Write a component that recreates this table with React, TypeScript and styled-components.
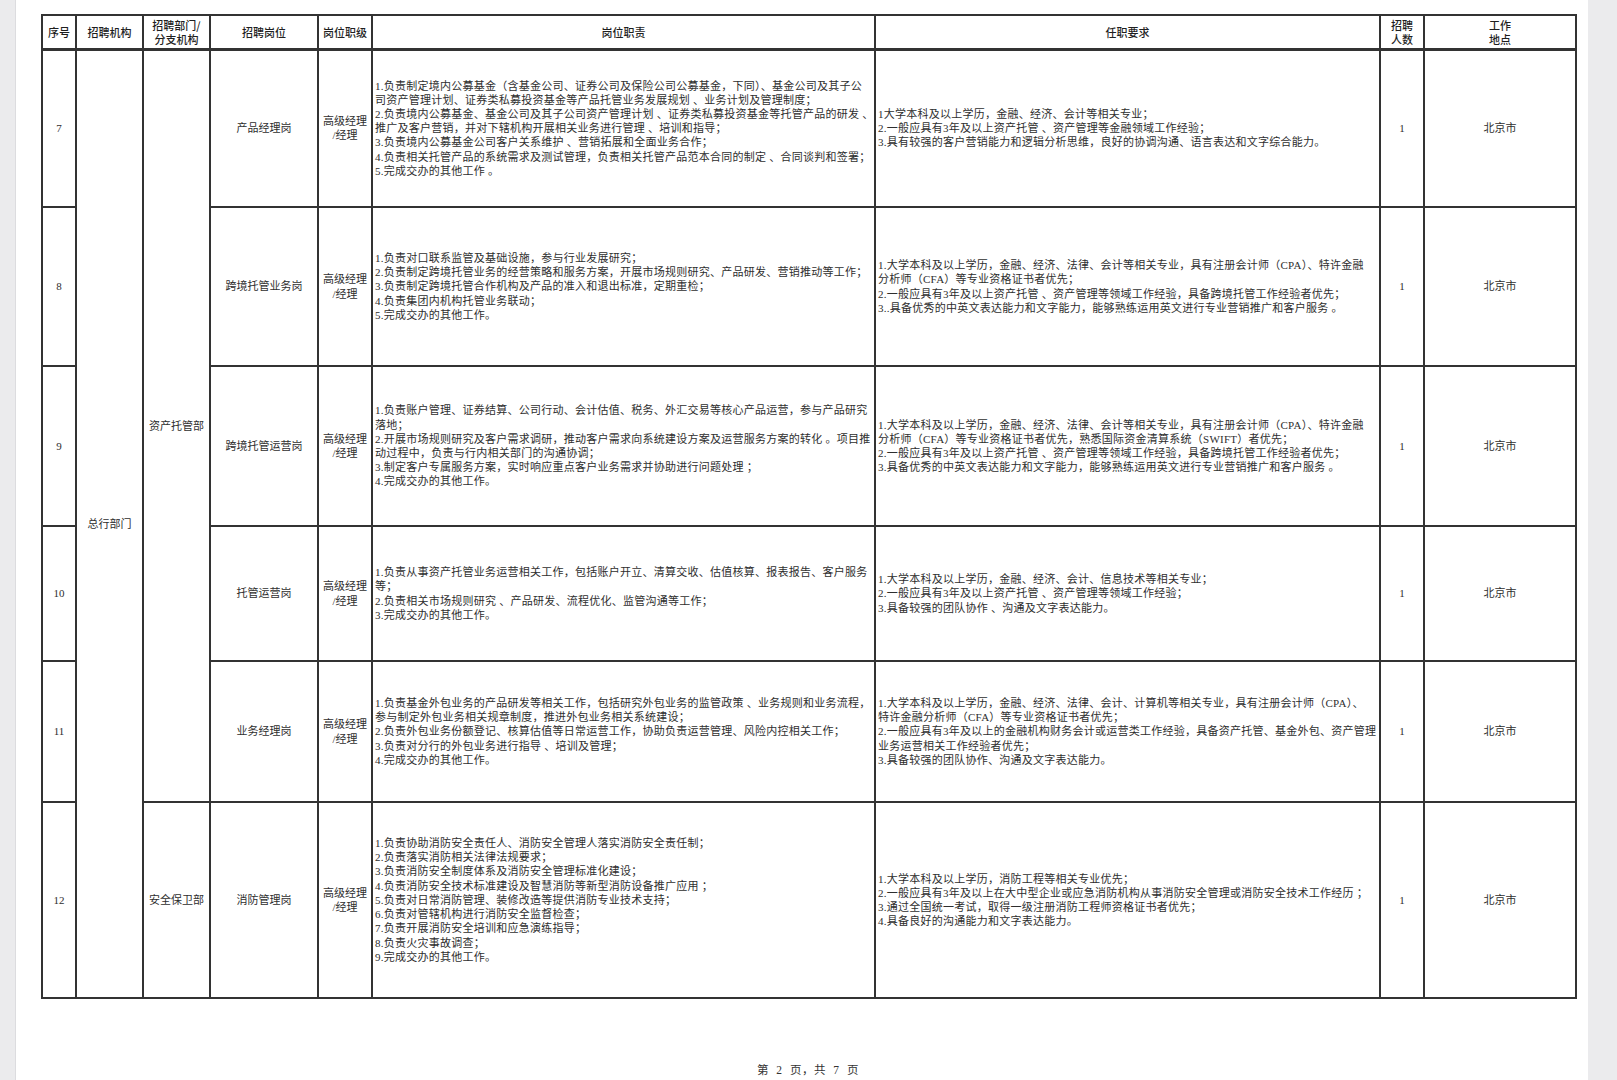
import React from 'react';
import styled, { createGlobalStyle } from 'styled-components';

const GlobalStyle = createGlobalStyle`
  html, body {
    margin: 0;
    padding: 0;
    background: #ebebed;
  }
  body {
    font-family: "Liberation Serif", "Noto Sans CJK SC", serif;
  }
`;

const Sheet = styled.div`
  margin: 0 29px 0 15px;
  height: 1080px;
  background: #ffffff;
  border-left: 1px solid #dcdcdf;
  padding: 14px 0 0 25px;
  box-sizing: border-box;
  display: flex;
  flex-direction: column;
`;

const Table = styled.table`
  width: 1534px;
  table-layout: fixed;
  border-collapse: collapse;
  color: #2e2e2e;
`;

const HeadRow = styled.tr`
  height: 34px;
`;

const HeadCell = styled.th`
  border: 2px solid #333;
  border-bottom-width: 3px;
  padding: 0 2px;
  font-family: "Noto Sans CJK SC", sans-serif;
  font-weight: 500;
  font-size: 11px;
  line-height: 14px;
  color: #1f1f1f;
  text-align: center;
  vertical-align: middle;
`;

const BodyRow = styled.tr<{ $h: number }>`
  height: ${p => p.$h}px;
`;

const Cell = styled.td<{ $left?: boolean }>`
  border: 2px solid #333;
  padding: 0 2px;
  font-size: 11px;
  line-height: 14.2px;
  letter-spacing: ${p => (p.$left ? '0.25px' : '0')};
  text-align: ${p => (p.$left ? 'left' : 'center')};
  vertical-align: middle;
  overflow: hidden;
`;

const Line = styled.div`
  white-space: nowrap;
`;

const Footer = styled.div`
  margin-top: 62px;
  width: 1534px;
  text-align: center;
  font-size: 11.5px;
  color: #333;
  word-spacing: 4px;
  letter-spacing: 0.5px;
`;

type Row = {
  no: string;
  post: string;
  h: number;
  duties: string[];
  reqs: string[];
};

const rows: Row[] = [
  {
    no: '7',
    post: '产品经理岗',
    h: 158,
    duties: [
      '1.负责制定境内公募基金（含基金公司、证券公司及保险公司公募基金，下同）、基金公司及其子公',
      '司资产管理计划、证券类私募投资基金等产品托管业务发展规划 、业务计划及管理制度；',
      '2.负责境内公募基金、基金公司及其子公司资产管理计划 、证券类私募投资基金等托管产品的研发 、',
      '推广及客户营销，并对下辖机构开展相关业务进行管理 、培训和指导；',
      '3.负责境内公募基金公司客户关系维护 、营销拓展和全面业务合作；',
      '4.负责相关托管产品的系统需求及测试管理，负责相关托管产品范本合同的制定 、合同谈判和签署；',
      '5.完成交办的其他工作 。',
    ],
    reqs: [
      '1大学本科及以上学历，金融、经济、会计等相关专业；',
      '2.一般应具有3年及以上资产托管 、资产管理等金融领域工作经验；',
      '3.具有较强的客户营销能力和逻辑分析思维，良好的协调沟通、语言表达和文字综合能力。',
    ],
  },
  {
    no: '8',
    post: '跨境托管业务岗',
    h: 159,
    duties: [
      '1.负责对口联系监管及基础设施，参与行业发展研究；',
      '2.负责制定跨境托管业务的经营策略和服务方案，开展市场规则研究、产品研发、营销推动等工作；',
      '3.负责制定跨境托管合作机构及产品的准入和退出标准，定期重检；',
      '4.负责集团内机构托管业务联动；',
      '5.完成交办的其他工作。',
    ],
    reqs: [
      '1.大学本科及以上学历，金融、经济、法律、会计等相关专业，具有注册会计师（CPA）、特许金融',
      '分析师（CFA）等专业资格证书者优先；',
      '2.一般应具有3年及以上资产托管 、资产管理等领域工作经验，具备跨境托管工作经验者优先；',
      '3..具备优秀的中英文表达能力和文字能力，能够熟练运用英文进行专业营销推广和客户服务 。',
    ],
  },
  {
    no: '9',
    post: '跨境托管运营岗',
    h: 160,
    duties: [
      '1.负责账户管理、证券结算、公司行动、会计估值、税务、外汇交易等核心产品运营，参与产品研究',
      '落地；',
      '2.开展市场规则研究及客户需求调研，推动客户需求向系统建设方案及运营服务方案的转化 。项目推',
      '动过程中，负责与行内相关部门的沟通协调；',
      '3.制定客户专属服务方案，实时响应重点客户业务需求并协助进行问题处理 ；',
      '4.完成交办的其他工作。',
    ],
    reqs: [
      '1.大学本科及以上学历，金融、经济、法律、会计等相关专业，具有注册会计师（CPA）、特许金融',
      '分析师（CFA）等专业资格证书者优先，熟悉国际资金清算系统（SWIFT）者优先；',
      '2.一般应具有3年及以上资产托管 、资产管理等领域工作经验，具备跨境托管工作经验者优先；',
      '3.具备优秀的中英文表达能力和文字能力，能够熟练运用英文进行专业营销推广和客户服务 。',
    ],
  },
  {
    no: '10',
    post: '托管运营岗',
    h: 135,
    duties: [
      '1.负责从事资产托管业务运营相关工作，包括账户开立、清算交收、估值核算、报表报告、客户服务',
      '等；',
      '2.负责相关市场规则研究 、产品研发、流程优化、监管沟通等工作；',
      '3.完成交办的其他工作。',
    ],
    reqs: [
      '1.大学本科及以上学历，金融、经济、会计、信息技术等相关专业；',
      '2.一般应具有3年及以上资产托管 、资产管理等领域工作经验；',
      '3.具备较强的团队协作 、沟通及文字表达能力。',
    ],
  },
  {
    no: '11',
    post: '业务经理岗',
    h: 141,
    duties: [
      '1.负责基金外包业务的产品研发等相关工作，包括研究外包业务的监管政策 、业务规则和业务流程，',
      '参与制定外包业务相关规章制度，推进外包业务相关系统建设；',
      '2.负责外包业务份额登记、核算估值等日常运营工作，协助负责运营管理、风险内控相关工作；',
      '3.负责对分行的外包业务进行指导 、培训及管理；',
      '4.完成交办的其他工作。',
    ],
    reqs: [
      '1.大学本科及以上学历，金融、经济、法律、会计、计算机等相关专业，具有注册会计师（CPA）、',
      '特许金融分析师（CFA）等专业资格证书者优先；',
      '2.一般应具有3年及以上的金融机构财务会计或运营类工作经验，具备资产托管、基金外包、资产管理',
      '业务运营相关工作经验者优先；',
      '3.具备较强的团队协作、沟通及文字表达能力。',
    ],
  },
  {
    no: '12',
    post: '消防管理岗',
    h: 196,
    duties: [
      '1.负责协助消防安全责任人、消防安全管理人落实消防安全责任制；',
      '2.负责落实消防相关法律法规要求；',
      '3.负责消防安全制度体系及消防安全管理标准化建设；',
      '4.负责消防安全技术标准建设及智慧消防等新型消防设备推广应用 ；',
      '5.负责对日常消防管理、装修改造等提供消防专业技术支持；',
      '6.负责对管辖机构进行消防安全监督检查；',
      '7.负责开展消防安全培训和应急演练指导；',
      '8.负责火灾事故调查；',
      '9.完成交办的其他工作。',
    ],
    reqs: [
      '1.大学本科及以上学历，消防工程等相关专业优先；',
      '2.一般应具有3年及以上在大中型企业或应急消防机构从事消防安全管理或消防安全技术工作经历 ；',
      '3.通过全国统一考试，取得一级注册消防工程师资格证书者优先；',
      '4.具备良好的沟通能力和文字表达能力。',
    ],
  },
];

const colWidths = [34, 67, 67, 108, 54, 503, 505, 44, 152];

function Lines({ items }: { items: string[] }) {
  return (
    <>
      {items.map((t, i) => (
        <Line key={i}>{t}</Line>
      ))}
    </>
  );
}

export default function App() {
  return (
    <>
      <GlobalStyle />
      <Sheet>
        <Table>
          <colgroup>
            {colWidths.map((w, i) => (
              <col key={i} style={{ width: w }} />
            ))}
          </colgroup>
          <thead>
            <HeadRow>
              <HeadCell>序号</HeadCell>
              <HeadCell>招聘机构</HeadCell>
              <HeadCell>
                招聘部门/
                <br />
                分支机构
              </HeadCell>
              <HeadCell>招聘岗位</HeadCell>
              <HeadCell>岗位职级</HeadCell>
              <HeadCell>岗位职责</HeadCell>
              <HeadCell>任职要求</HeadCell>
              <HeadCell>
                招聘
                <br />
                人数
              </HeadCell>
              <HeadCell>
                工作
                <br />
                地点
              </HeadCell>
            </HeadRow>
          </thead>
          <tbody>
            {rows.map((r, i) => (
              <BodyRow key={r.no} $h={r.h}>
                <Cell>{r.no}</Cell>
                {i === 0 && <Cell rowSpan={6}>总行部门</Cell>}
                {i === 0 && <Cell rowSpan={5}>资产托管部</Cell>}
                {i === 5 && <Cell>安全保卫部</Cell>}
                <Cell>{r.post}</Cell>
                <Cell>
                  高级经理
                  <br />
                  /经理
                </Cell>
                <Cell $left>
                  <Lines items={r.duties} />
                </Cell>
                <Cell $left>
                  <Lines items={r.reqs} />
                </Cell>
                <Cell>1</Cell>
                <Cell>北京市</Cell>
              </BodyRow>
            ))}
          </tbody>
        </Table>
        <Footer>第 2 页，共 7 页</Footer>
      </Sheet>
    </>
  );
}
